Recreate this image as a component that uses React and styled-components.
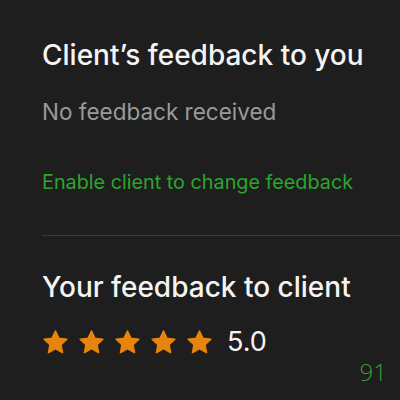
import React from "react";
import styled, { createGlobalStyle } from "styled-components";

const GlobalStyle = createGlobalStyle`
  html, body {
    margin: 0;
    padding: 0;
    background: #1e1e1e;
  }
  body {
    font-family: Inter, "Liberation Sans", Arial, sans-serif;
  }
`;

const Page = styled.div`
  width: 400px;
  height: 400px;
  background: #1e1e1e;
  padding-left: 42px;
  box-sizing: border-box;
  position: relative;
  overflow: hidden;
`;

const Section = styled.section`
  padding-top: ${(p) => p.$top}px;
  padding-right: 20px;
`;

const Title = styled.h2`
  margin: 0;
  color: #f4f4f4;
  font-size: 28px;
  font-weight: 500;
  line-height: 30px;
  white-space: nowrap;
`;

const Muted = styled.p`
  margin: 30px 0 0;
  color: #9a9a9a;
  font-size: 22.5px;
  line-height: 24px;
  white-space: nowrap;
`;

const GreenLink = styled.a`
  display: block;
  margin-top: 47px;
  color: #2ca52c;
  font-size: 19.8px;
  line-height: 22px;
  text-decoration: none;
  white-space: nowrap;
`;

const Divider = styled.hr`
  margin: 42px 0 0;
  border: 0;
  border-top: 1px solid #3a3a3a;
`;

const Rating = styled.div`
  display: flex;
  align-items: center;
  gap: 12px;
  margin-top: 26px;
`;

const Stars = styled.div`
  display: flex;
  gap: 9px;
`;

const Score = styled.span`
  margin-left: 2px;
  color: #f4f4f4;
  font-size: 27px;
  line-height: 28px;
`;

const PageNo = styled.span`
  position: absolute;
  right: 13px;
  bottom: 12px;
  color: #3c9c3c;
  font-size: 24px;
  font-family: "Open Sans", sans-serif;
  font-weight: 300;
`;

const Star = () => (
  <svg width="27" height="27" viewBox="0 0 24 24">
    <path
      d="M12 1.8l3.05 6.5 7.05.85-5.2 4.85 1.35 7-6.25-3.5-6.25 3.5 1.35-7L1.9 9.15l7.05-.85z"
      fill="#e8840e"
      stroke="#e8840e"
      strokeWidth="1.4"
      strokeLinejoin="round"
    />
  </svg>
);

export default function App() {
  return (
    <Page>
      <GlobalStyle />
      <Section $top={40}>
        <Title>Client’s feedback to you</Title>
        <Muted>No feedback received</Muted>
        <GreenLink href="#">Enable client to change feedback</GreenLink>
      </Section>
      <Divider />
      <Section $top={36}>
        <Title>Your feedback to client</Title>
        <Rating>
          <Stars>
            {[0, 1, 2, 3, 4].map((i) => (
              <Star key={i} />
            ))}
          </Stars>
          <Score>5.0</Score>
        </Rating>
      </Section>
      <PageNo>91</PageNo>
    </Page>
  );
}
